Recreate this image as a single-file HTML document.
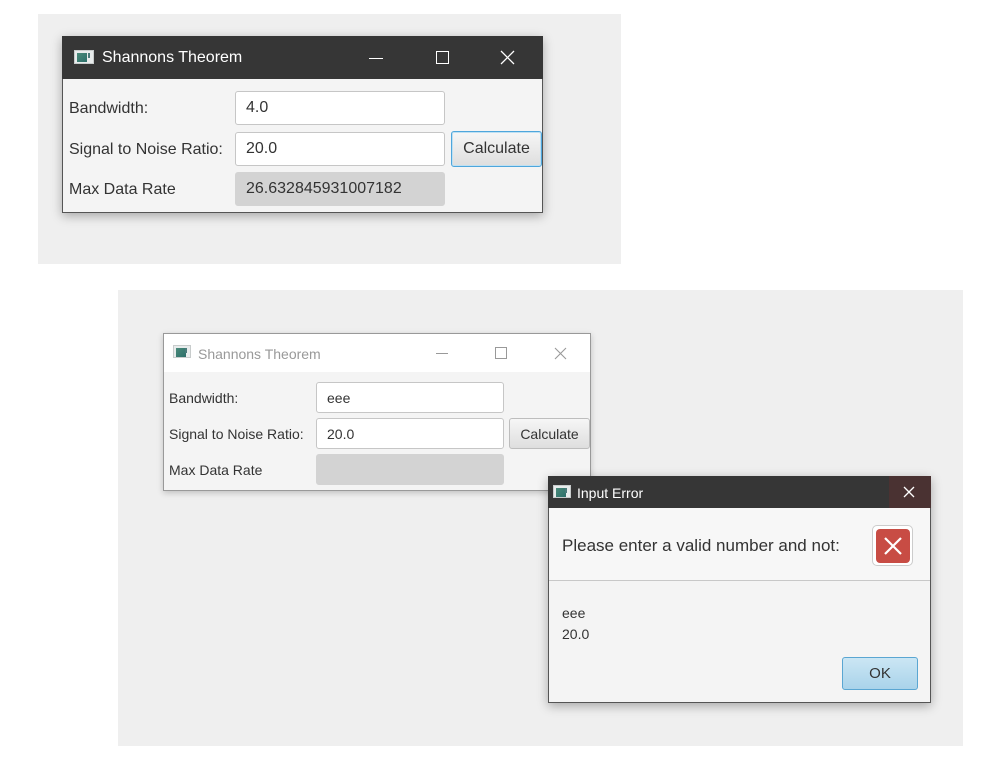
<!DOCTYPE html>
<html><head><style>
*{margin:0;padding:0;box-sizing:border-box}
body{width:986px;height:765px;background:#fff;position:relative;overflow:hidden;font-family:"Liberation Sans","DejaVu Sans",sans-serif;color:#333}
.a{position:absolute}
.ico{position:absolute;width:20px;height:14px;background:#e8ecec;border:1px solid #c8cccc}
.ico::before{content:"";position:absolute;left:2px;top:2px;width:10px;height:9px;background:linear-gradient(135deg,#4a8a7a,#2c6f6a)}
.ico::after{content:"";position:absolute;right:3px;top:2px;width:2px;height:5px;background:#4a7a7a}
.fld{position:absolute;background:#fff;border:1px solid #c6c6c6;border-radius:3px;padding-left:10px;display:flex;align-items:center}
.gry{background:#d3d3d3;border-color:#d3d3d3}
.btn{position:absolute;border:1px solid #bdbdbd;border-radius:3px;background:linear-gradient(#f6f6f6,#dedede);display:flex;align-items:center;justify-content:center}
</style></head><body>
<div class="a" style="left:38px;top:14px;width:583px;height:250px;background:#efefef"></div>
<div class="a" style="left:62px;top:36px;width:481px;height:177px;background:#f4f4f4;border:1px solid #555;box-shadow:0 3px 10px rgba(0,0,0,.3)"></div>
<div class="a" style="left:62px;top:36px;width:481px;height:43px;background:#363636"></div>
<div class="ico" style="left:74px;top:50px"></div>
<div class="a" style="left:102px;top:49px;font-size:16px;color:#fff">Shannons Theorem</div>
<div class="a" style="left:369px;top:58px;width:14px;height:1px;background:#fff"></div>
<div class="a" style="left:436px;top:51px;width:13px;height:13px;border:1px solid #fff"></div>
<svg class="a" style="left:500px;top:50px" width="15" height="15"><path d="M1 1L14 14M14 1L1 14" stroke="#fff" stroke-width="1.3"/></svg>
<div class="a" style="left:69px;top:100px;font-size:16px">Bandwidth:</div>
<div class="a" style="left:69px;top:141px;font-size:16px">Signal to Noise Ratio:</div>
<div class="a" style="left:69px;top:181px;font-size:16px">Max Data Rate</div>
<div class="fld" style="left:235px;top:91px;width:210px;height:34px;font-size:16px">4.0</div>
<div class="fld" style="left:235px;top:132px;width:210px;height:34px;font-size:16px">20.0</div>
<div class="fld gry" style="left:235px;top:172px;width:210px;height:34px;font-size:16px">26.632845931007182</div>
<div class="btn" style="left:451px;top:131px;width:91px;height:36px;font-size:16px;border:1px solid #4ea6dc;box-shadow:inset 0 0 0 1px #bfe0f2">Calculate</div>

<div class="a" style="left:118px;top:290px;width:845px;height:456px;background:#efefef"></div>
<div class="a" style="left:163px;top:333px;width:428px;height:158px;background:#f4f4f4;border:1px solid #999;box-shadow:0 2px 6px rgba(0,0,0,.2)"></div>
<div class="a" style="left:164px;top:334px;width:426px;height:38px;background:#fff"></div>
<div class="ico" style="left:173px;top:345px;width:18px;height:13px"></div>
<div class="a" style="left:198px;top:346px;font-size:14px;color:#999">Shannons Theorem</div>
<div class="a" style="left:436px;top:353px;width:12px;height:1px;background:#999"></div>
<div class="a" style="left:495px;top:347px;width:12px;height:12px;border:1px solid #999"></div>
<svg class="a" style="left:554px;top:347px" width="13" height="13"><path d="M1 1L12 12M12 1L1 12" stroke="#999" stroke-width="1.1"/></svg>
<div class="a" style="left:169px;top:390px;font-size:14px">Bandwidth:</div>
<div class="a" style="left:169px;top:426px;font-size:14px">Signal to Noise Ratio:</div>
<div class="a" style="left:169px;top:462px;font-size:14px">Max Data Rate</div>
<div class="fld" style="left:316px;top:382px;width:188px;height:31px;font-size:14px">eee</div>
<div class="fld" style="left:316px;top:418px;width:188px;height:31px;font-size:14px">20.0</div>
<div class="fld gry" style="left:316px;top:454px;width:188px;height:31px"></div>
<div class="btn" style="left:509px;top:418px;width:81px;height:31px;font-size:14px">Calculate</div>

<div class="a" style="left:548px;top:476px;width:383px;height:227px;background:#f4f4f4;border:1px solid #555;box-shadow:0 3px 10px rgba(0,0,0,.3)"></div>
<div class="a" style="left:548px;top:476px;width:383px;height:32px;background:#363636"></div>
<div class="a" style="left:889px;top:476px;width:42px;height:32px;background:#4a3232"></div>
<div class="ico" style="left:553px;top:485px;width:18px;height:13px"></div>
<div class="a" style="left:577px;top:485px;font-size:14px;color:#fff">Input Error</div>
<svg class="a" style="left:903px;top:486px" width="12" height="12"><path d="M1 1L11 11M11 1L1 11" stroke="#fff" stroke-width="1.3"/></svg>
<div class="a" style="left:549px;top:508px;width:381px;height:73px;background:#f7f7f7;border-bottom:1px solid #c8c8c8"></div>
<div class="a" style="left:562px;top:536px;font-size:17px">Please enter a valid number and not:</div>
<div class="a" style="left:872px;top:525px;width:41px;height:41px;border:1px solid #ccc;border-radius:5px;background:#fff"></div>
<div class="a" style="left:876px;top:529px;width:34px;height:34px;border-radius:4px;background:#c84c44"></div>
<svg class="a" style="left:883px;top:536px" width="20" height="20"><path d="M2 2L18 18M18 2L2 18" stroke="#fff" stroke-width="2.2"/></svg>
<div class="a" style="left:562px;top:603px;font-size:14px;line-height:21px">eee<br>20.0</div>
<div class="btn" style="left:842px;top:657px;width:76px;height:33px;font-size:15px;border:1px solid #5aa6d2;background:linear-gradient(#cbe6f4,#a9d3ea)">OK</div>
</body></html>
